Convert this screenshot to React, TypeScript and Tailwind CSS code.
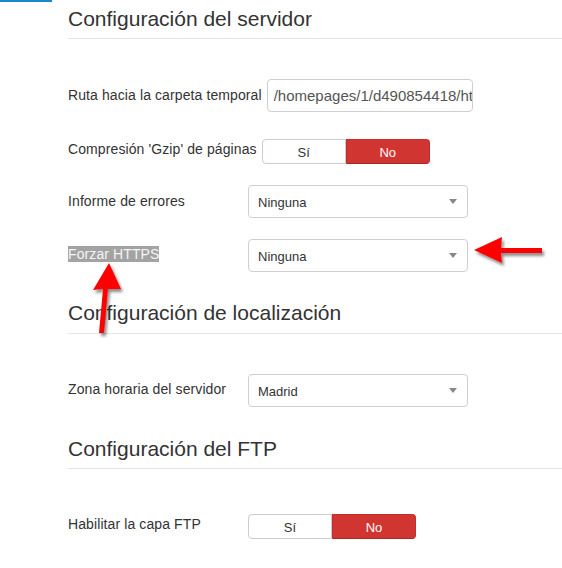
import React from "react";

function Caret() {
  return (
    <svg width="8" height="5" viewBox="0 0 8 5" className="block">
      <path d="M0 0 L8 0 L4 5 Z" fill="#888" />
    </svg>
  );
}

function Select({ value }: { value: string }) {
  return (
    <div className="flex h-[33px] w-[220px] items-center justify-between rounded-[4px] border border-[#cfcfcf] bg-white pl-[9px] pr-[10px] text-[13px] text-[#333]">
      <span className="pt-[3px]">{value}</span>
      <Caret />
    </div>
  );
}

function Toggle() {
  return (
    <div className="flex h-[25px] w-[168px] text-[13px]">
      <div className="flex w-[84px] items-center justify-center rounded-l-[4px] border border-[#cccccc] bg-white text-[#333]">
        <span className="pt-[2px]">Sí</span>
      </div>
      <div className="flex w-[84px] items-center justify-center rounded-r-[4px] border border-[#c22f2a] border-b-[#a82823] bg-[#d13531] text-white">
        <span className="pt-[2px]">No</span>
      </div>
    </div>
  );
}

function Heading({ children, className }: { children: React.ReactNode; className: string }) {
  return (
    <h2 className={"text-[21px] leading-[26px] font-normal text-[#333] " + className}>{children}</h2>
  );
}

const labelCls =
  "min-w-[180px] pr-[5px] text-[14px] leading-[20px] tracking-[0.1px] whitespace-nowrap text-[#333]";

export default function App() {
  return (
    <div className="relative h-[568px] w-[562px] overflow-hidden bg-white font-['Liberation_Sans',Arial,sans-serif] text-[#333]">
      <div className="h-[2px] w-[52px] bg-[#1a86cf]" />
      <div className="pl-[68px]">
        <Heading className="mt-[4px]">Configuración del servidor</Heading>
        <div className="mt-[6px] h-px bg-[#e5e5e5]" />

        <div className="mt-[40px] flex items-start">
          <label className={labelCls + " pt-[6px]"}>Ruta hacia la carpeta temporal</label>
          <div className="flex h-[33px] w-[206px] items-center overflow-hidden whitespace-nowrap rounded-[4px] border border-[#cfcfcf] bg-white pl-[6px] text-[15px] text-[#555]">
            <span className="pt-[1px]">/homepages/1/d490854418/htdocs/tmp</span>
          </div>
        </div>

        <div className="mt-[27px] flex items-start">
          <label className={labelCls}>Compresión 'Gzip' de páginas</label>
          <Toggle />
        </div>

        <div className="mt-[21px] flex items-start">
          <label className={labelCls + " pt-[6px]"}>Informe de errores</label>
          <Select value="Ninguna" />
        </div>

        <div className="mt-[21px] flex items-start">
          <label className={labelCls + " pt-[5px]"}>
            <span className="bg-[#a3a3a3] text-[#f4f4f4]">Forzar HTTPS</span>
          </label>
          <Select value="Ninguna" />
        </div>

        <Heading className="mt-[28px]">Configuración de localización</Heading>
        <div className="mt-[7px] h-px bg-[#e5e5e5]" />

        <div className="mt-[40px] flex items-start">
          <label className={labelCls + " pt-[5px]"}>Zona horaria del servidor</label>
          <Select value="Madrid" />
        </div>

        <Heading className="mt-[29px]">Configuración del FTP</Heading>
        <div className="mt-[6px] h-px bg-[#e5e5e5]" />

        <div className="mt-[45px] flex items-start">
          <label className={labelCls}>Habilitar la capa FTP</label>
          <Toggle />
        </div>
      </div>

      <svg
        className="pointer-events-none absolute left-0 top-0"
        width="562"
        height="568"
        viewBox="0 0 562 568"
      >
        <defs>
          <filter id="sh" x="-20%" y="-20%" width="150%" height="150%">
            <feDropShadow dx="2" dy="3" stdDeviation="1.6" floodColor="#000" floodOpacity="0.45" />
          </filter>
        </defs>
        <polygon
          points="474,250 502,237 501,248 542,248 542,253 501,253 502,263"
          fill="#ff0000"
          filter="url(#sh)"
        />
        <polygon
          points="109,263 121,289 108,289 104,333 99,333 103,289 93,290"
          fill="#ff0000"
          filter="url(#sh)"
        />
      </svg>
    </div>
  );
}
